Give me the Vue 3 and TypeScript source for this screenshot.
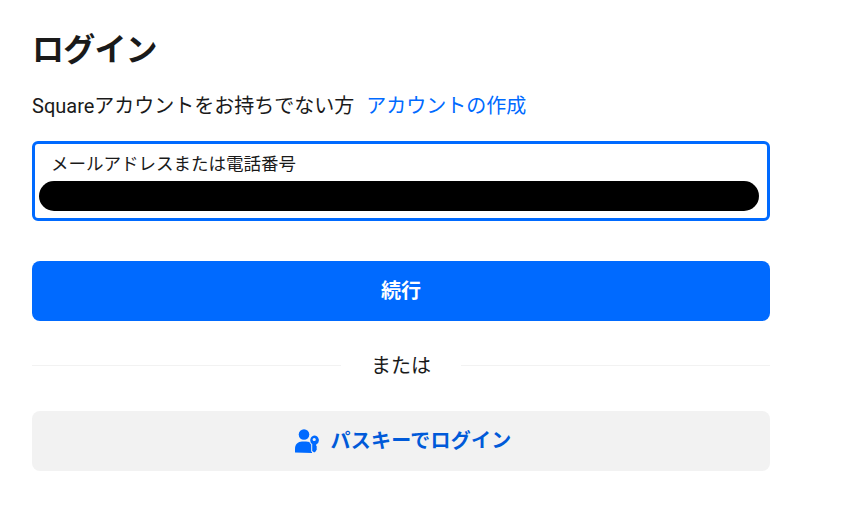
<script setup lang="ts">
const title: string = 'ログイン'
</script>

<template>
  <main class="page">
    <h1 class="title">{{ title }}</h1>
    <p class="signup">
      <span>Squareアカウントをお持ちでない方</span>
      <a class="link" href="#">アカウントの作成</a>
    </p>
    <div class="field">
      <label class="label">メールアドレスまたは電話番号</label>
      <div class="mask"></div>
    </div>
    <button class="btn primary" type="button"><span class="btn-text">続行</span></button>
    <div class="divider">
      <span class="rule"></span>
      <span class="or">または</span>
      <span class="rule"></span>
    </div>
    <button class="btn secondary" type="button">
      <svg class="icon" width="24" height="24" viewBox="0 0 24 24" fill="#006aff">
        <circle cx="9" cy="5.500" r="5.300" />
        <path d="M0 23.500v-4c0-4 3-7 7-7h4c2.500 0 4.500.8 6 2.500v9z" />
        <path stroke="#f2f2f2" stroke-width="2" paint-order="stroke" fill-rule="evenodd" d="M19.200 6.500a4.800 4.800 0 0 1 2 9.100v1.400l1 1-1 1 1 1-1 1v1l-2 1.500-2-1.500v-6.900A4.800 4.800 0 0 1 19.200 6.500zm0 2.400a1.600 1.600 0 1 0 0 3.200 1.600 1.600 0 0 0 0-3.200z" />
      </svg>
      <span class="btn-text wide">パスキーでログイン</span>
    </button>
  </main>
</template>

<style scoped>
.page {
  width: 738px;
  padding: 28px 0 0 32px;
  font-family: "Roboto", "Noto Sans CJK JP", sans-serif;
  color: #1a1a1a;
}
.title {
  margin: 0;
  font-size: 32px;
  line-height: 44px;
  font-weight: 700;
  letter-spacing: -0.8px;
}
.signup {
  margin: 18px 0 0;
  font-size: 20px;
  line-height: 32px;
  display: flex;
  gap: 12px;
}
.link {
  color: #006aff;
  text-decoration: none;
}
.field {
  box-sizing: border-box;
  height: 80px;
  margin-top: 19px;
  border: 3px solid #006aff;
  border-radius: 6px;
  padding: 7px 8px 0 4px;
}
.label {
  display: block;
  margin-left: 12px;
  font-size: 17.5px;
  line-height: 26px;
  color: #1a1a1a;
}
.mask {
  height: 30px;
  margin-top: 4px;
  background: #000;
  border-radius: 15px;
}
.btn {
  display: flex;
  align-items: center;
  justify-content: center;
  gap: 12px;
  width: 100%;
  height: 60px;
  border: 0;
  border-radius: 8px;
  font-family: inherit;
  font-size: 20px;
  font-weight: 700;
}
.btn-text {
  margin-bottom: 4px;
}
.wide {
  letter-spacing: 0.25px;
}
.primary {
  margin-top: 40px;
  background: #006aff;
  color: #fff;
}
.divider {
  display: flex;
  align-items: center;
  gap: 30px;
  height: 32px;
  margin-top: 28px;
}
.rule {
  flex: 1;
  height: 1px;
  background: #f2f2f2;
}
.or {
  font-size: 20px;
  line-height: 32px;
  padding-top: 2px;
}
.secondary {
  margin-top: 30px;
  padding-left: 11px;
  gap: 11px;
  background: #f2f2f2;
  color: #005ad9;
}
.icon {
  margin-bottom: 1px;
}
</style>
